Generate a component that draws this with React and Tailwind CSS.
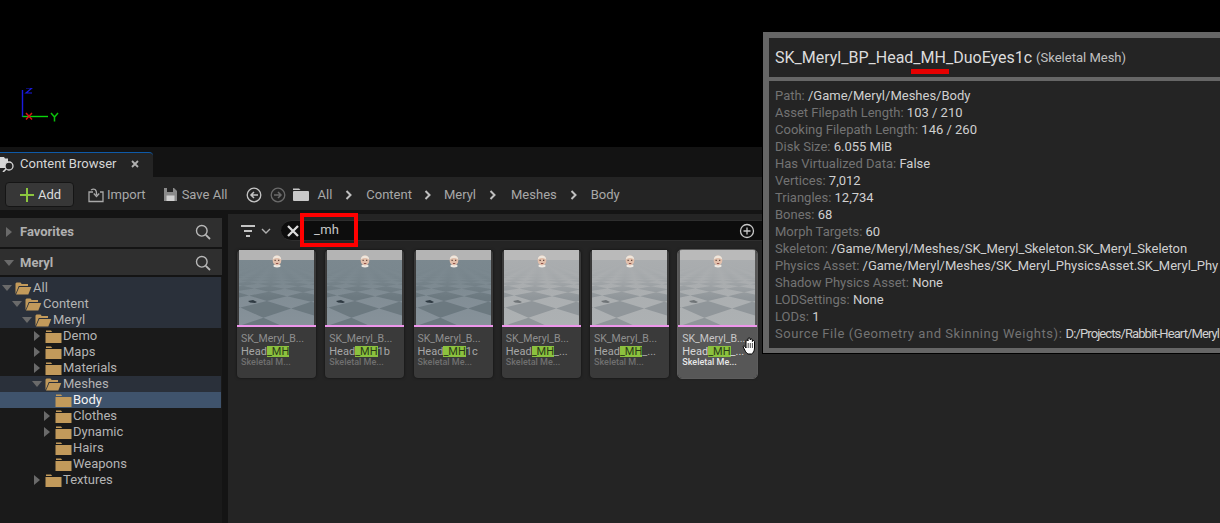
import React from "react";

const FONT = "font-['Roboto','Liberation_Sans',sans-serif]";

function Tri({ open, className = "" }) {
  return (
    <svg width="12" height="12" viewBox="0 0 12 12" className={className}>
      {open ? <path d="M1 3h10l-5 6z" fill="#6a6a6a" /> : <path d="M3 1v10l6-5z" fill="#6a6a6a" />}
    </svg>
  );
}

function Folder({ open }) {
  return open ? (
    <svg width="17" height="13" viewBox="0 0 17 13">
      <path d="M0.5 12V1.5L1.5 0.5h4l1.2 1.5h6.3V4H3.8L0.5 12z" fill="#c29a5b" />
      <path d="M4.3 5h12l-3 7.5H1z" fill="#c29a5b" />
    </svg>
  ) : (
    <svg width="17" height="13" viewBox="0 0 17 13">
      <path d="M1 0.5h5l1.2 1.6H1z" fill="#c29a5b" />
      <rect x="0.5" y="3" width="16" height="10" fill="#c29a5b" />
    </svg>
  );
}

function SearchIcon() {
  return (
    <svg width="16" height="16" viewBox="0 0 16 16" fill="none" stroke="#b8b8b8" strokeWidth="1.4">
      <circle cx="6.8" cy="6.8" r="5.3" />
      <path d="M10.8 10.8l4.2 4.2" strokeWidth="1.8" />
    </svg>
  );
}

function Chevron({ className = "" }) {
  return (
    <svg width="8" height="10" viewBox="0 0 8 10" fill="none" stroke="#c0c0c0" strokeWidth="2" className={className}>
      <path d="M1.5 1l4 4-4 4" />
    </svg>
  );
}

const floorCache = {};
function floorPolys() {
  if (floorCache.p) return floorCache.p;
  const a = 0.72;
  const c = Math.cos(a), s = Math.sin(a);
  const project = (x, z) => {
    const rx = x * c - z * s;
    const rz = x * s + z * c;
    if (rz < 1.2) return null;
    return [26.5 + (rx / rz) * 150, 10 + 150 / rz];
  };
  const T = 0.75;
  const ox = -0.565, oz = 0.475;
  const out = [];
  for (let i = -80; i < 80; i++) {
    for (let j = -80; j < 80; j++) {
      if (((i + j) % 2 + 2) % 2 === 0) continue;
      const pts = [
        project(ox + i * T, oz + j * T),
        project(ox + (i + 1) * T, oz + j * T),
        project(ox + (i + 1) * T, oz + (j + 1) * T),
        project(ox + i * T, oz + (j + 1) * T),
      ];
      if (pts.some((p) => !p)) continue;
      if (pts.every((p) => p[0] < -5) || pts.every((p) => p[0] > 80) || pts.every((p) => p[1] > 80)) continue;
      out.push(pts.map((p) => p[0].toFixed(1) + "," + p[1].toFixed(1)).join(" "));
    }
  }
  floorCache.p = out;
  return out;
}

function Thumb({ id, light }) {
  const sky = light ? "#bababa" : "#b4b4b4";
  const far = light ? "#aaadaf" : "#7b888f";
  const near = light ? "#adb1b3" : "#87929a";
  const dark = light ? "#90969a" : "#6c7980";
  return (
    <svg viewBox="0 0 75 75" width="75" height="75" className="block">
      <defs>
        <linearGradient id={"g" + id} x1="0" y1="0" x2="0" y2="1">
          <stop offset="0" stopColor={far} />
          <stop offset="1" stopColor={near} />
        </linearGradient>
        <linearGradient id={"f" + id} x1="0" y1="0" x2="0" y2="1">
          <stop offset="0" stopColor={far} stopOpacity="1" />
          <stop offset="0.5" stopColor={far} stopOpacity="0.75" />
          <stop offset="1" stopColor={far} stopOpacity="0" />
        </linearGradient>
        <clipPath id={"c" + id}><rect x="0" y="10" width="75" height="65" /></clipPath>
      </defs>
      <rect width="75" height="10" fill={sky} />
      <rect y="10" width="75" height="65" fill={"url(#g" + id + ")"} />
      <g clipPath={"url(#c" + id + ")"}>
        {floorPolys().map((p, i) => (
          <polygon key={i} points={p} fill={dark} />
        ))}
      </g>
      <rect y="10" width="75" height="38" fill={"url(#f" + id + ")"} />
      <path d="M9 51l5-1 4 2-2 1-5-.5z" fill={light ? "#6f7477" : "#2f3a42"} />
      <ellipse cx="38" cy="16" rx="3.600" ry="1.400" fill="#eeeae4" />
      <ellipse cx="38" cy="10.500" rx="4.300" ry="5" fill="#e2c0ac" />
      <path d="M33.800 9.500c0-5.500 8.400-5.500 8.400 0-2.400-2-6-2-8.400 0z" fill="#efe6dc" />
      <rect x="35.500" y="9.800" width="1.300" height="1" fill="#4a3028" />
      <rect x="39" y="9.800" width="1.300" height="1" fill="#4a3028" />
      <rect x="36.900" y="13" width="2.400" height="0.900" fill="#8a4a42" />
    </svg>
  );
}

const cards = [
  { pre: "Head", rest: "", t: "Skeletal M..." },
  { pre: "Head", rest: "1b", t: "Skeletal Me..." },
  { pre: "Head", rest: "1c", t: "Skeletal Me..." },
  { pre: "Head", rest: "_...", t: "Skeletal Me...", light: true },
  { pre: "Head", rest: "_...", t: "Skeletal M...", light: true },
  { pre: "Head", rest: "_...", t: "Skeletal Me...", light: true, sel: true },
];

function Card({ c, i }) {
  return (
    <div className={"relative flex h-[128px] w-[79px] shrink-0 flex-col rounded-[4px] shadow-[0_0_3px_rgba(0,0,0,0.6)] " + (c.sel ? "bg-[#575757] outline outline-1 outline-[#5c5c5c]" : "bg-[#3a3a3a]")}>
      <div className="mx-auto h-[75px] w-[75px] shrink-0 overflow-hidden">
        <Thumb id={i} light={c.light} />
      </div>
      <div className="h-[2px] shrink-0 bg-[#ee96ec]" />
      <div className="flex flex-col pl-[4px] pt-[5px]">
        <div className={"h-[13px] whitespace-nowrap text-[10.5px] leading-[13px] " + (c.sel ? "text-[#c8c8c8]" : "text-[#8e8e8e]")}>SK_Meryl_B...</div>
        <div className={"flex h-[13px] items-center whitespace-nowrap text-[11px] leading-[11px] " + (c.sel ? "text-[#d8d8d8]" : "text-[#a6a6a6]")}>
          <span>{c.pre}</span>
          <span className="h-[11px] bg-[#8bc13e] text-[#2a3a18]">_MH</span>
          <span>{c.rest}</span>
        </div>
        <div className={"mt-[-2px] h-[12px] whitespace-nowrap text-[9px] font-medium leading-[12px] " + (c.sel ? "text-[#e8e8e8]" : "text-[#6f6f6f]")}>{c.t}</div>
      </div>
    </div>
  );
}

const tree = [
  { d: 0, n: "All", open: true, tri: true, hl: 1 },
  { d: 1, n: "Content", open: true, tri: true, hl: 1 },
  { d: 2, n: "Meryl", open: true, tri: true, hl: 1 },
  { d: 3, n: "Demo", tri: true },
  { d: 3, n: "Maps", tri: true },
  { d: 3, n: "Materials", tri: true },
  { d: 3, n: "Meshes", open: true, tri: true, hl: 1 },
  { d: 4, n: "Body", hl: 2 },
  { d: 4, n: "Clothes", tri: true },
  { d: 4, n: "Dynamic", tri: true },
  { d: 4, n: "Hairs" },
  { d: 4, n: "Weapons" },
  { d: 3, n: "Textures", tri: true },
];

function TreeRow({ r }) {
  const bg = r.hl === 1 ? "bg-[#2a303a]" : r.hl === 2 ? "bg-[#3f536c]" : "";
  const text = r.hl === 2 ? "text-[#f4f4f4]" : "text-[#b4b4b4]";
  const pads = ["pl-[0px]", "pl-[10px]", "pl-[20px]", "pl-[30px]", "pl-[40px]"];
  return (
    <div className={"flex h-[16px] items-center text-[13px] leading-[16px] " + bg + " " + text + " " + pads[r.d]}>
      <span className="flex w-[14px] shrink-0 justify-center">{r.tri && <Tri open={r.open} />}</span>
      <span className="flex w-[19px] shrink-0 pl-[1px]"><Folder open={r.open} /></span>
      <span>{r.n}</span>
    </div>
  );
}

function PanelHead({ label, className = "" }) {
  return (
    <div className={"flex items-center justify-between bg-[#2f2f2f] pl-[3px] pr-[11px] " + className}>
      <div className="flex items-center gap-[5px]">
        <Tri open={label === "Meryl"} />
        <span className="text-[13px] font-bold text-[#b0b0b0]">{label}</span>
      </div>
      <SearchIcon />
    </div>
  );
}

const info = [
  ["Path:", "/Game/Meryl/Meshes/Body"],
  ["Asset Filepath Length:", "103 / 210"],
  ["Cooking Filepath Length:", "146 / 260"],
  ["Disk Size:", "6.055 MiB"],
  ["Has Virtualized Data:", "False"],
  ["Vertices:", "7,012"],
  ["Triangles:", "12,734"],
  ["Bones:", "68"],
  ["Morph Targets:", "60"],
  ["Skeleton:", "/Game/Meryl/Meshes/SK_Meryl_Skeleton.SK_Meryl_Skeleton"],
  ["Physics Asset:", "/Game/Meryl/Meshes/SK_Meryl_PhysicsAsset.SK_Meryl_Phy"],
  ["Shadow Physics Asset:", "None"],
  ["LODSettings:", "None"],
  ["LODs:", "1"],
  ["Source File (Geometry and Skinning Weights):", "D:/Projects/Rabbit-Heart/Meryl"],
];

export default function App() {
  return (
    <div className={"relative flex h-[523px] w-[1220px] flex-col overflow-hidden bg-black " + FONT}>
      {/* viewport */}
      <div className="relative h-[147px] shrink-0 bg-black">
        <svg width="70" height="40" viewBox="0 0 70 40" className="absolute left-[16px] top-[88px]">
          <path d="M6.500 2v27" stroke="#1a1ae0" strokeWidth="1.400" />
          <path d="M6.500 28.500H32" stroke="#0bd40b" strokeWidth="1.400" />
          <path d="M10 25l6 6.500m0-6.500l-6 6.500" stroke="#d81414" strokeWidth="1.500" fill="none" />
          <path d="M35 25l3.500 4L42 25m-3.500 4v4.500" stroke="#0bc00b" strokeWidth="1.500" fill="none" />
          <path d="M10 0h6l-6 5h6" stroke="#1a1ae0" strokeWidth="1.200" fill="none" />
        </svg>
      </div>

      {/* tab bar */}
      <div className="flex h-[30px] shrink-0 items-end bg-[#131313]">
        <div className="relative flex h-[25px] w-[153px] items-center rounded-tr-[4px] border-t border-[#0e5aa8] bg-[#242424] pb-[2px]">
          <svg width="16" height="16" viewBox="0 0 16 16" className="shrink-0">
            <path d="M-1 1h5l1 1.500h3V12H-1z" fill="#d8d8d8" />
            <circle cx="9" cy="10" r="4" fill="#242424" stroke="#d8d8d8" strokeWidth="1.300" />
            <path d="M6 13l-3 3" stroke="#d8d8d8" strokeWidth="1.600" />
          </svg>
          <span className="ml-[4px] text-[13px] text-[#d6d6d6]">Content Browser</span>
          <svg width="8" height="8" viewBox="0 0 8 8" className="ml-[15px]">
            <path d="M1 1l6 6m0-6l-6 6" stroke="#b0b0b0" strokeWidth="1.800" />
          </svg>
        </div>
      </div>

      {/* toolbar */}
      <div className="flex h-[33px] shrink-0 items-center bg-[#242424] pl-[5px] pt-[2px] text-[13px] text-[#a8a8a8]">
        <div className="flex h-[25px] w-[69px] items-center rounded-[4px] border border-[#151515] bg-[#373737] pl-[14px] text-[#dcdcdc]">
          <svg width="14" height="14" viewBox="0 0 14 14"><path d="M7 0v14M0 7h14" stroke="#8cc63f" strokeWidth="2" /></svg>
          <span className="ml-[4px]">Add</span>
        </div>
        <svg width="16" height="16" viewBox="0 0 16 16" fill="none" stroke="#a8a8a8" strokeWidth="1.300" className="ml-[14px]">
          <path d="M5 5H1v9.500h14V5h-3" />
          <path d="M3 3c3-2 6-1 5.500 5M5.800 6.500l2.700 3 2.700-3" />
        </svg>
        <span className="ml-[3px]">Import</span>
        <svg width="15" height="15" viewBox="0 0 15 15" className="ml-[17px]">
          <path d="M1 1h10l3 3v10H1z" fill="#8a8a8a" />
          <rect x="4" y="1" width="6" height="4" fill="#242424" />
          <rect x="3.500" y="8.500" width="8" height="5.500" fill="#d0d0d0" />
        </svg>
        <span className="ml-[4px]">Save All</span>
        <svg width="16" height="16" viewBox="0 0 16 16" fill="none" stroke="#c4c4c4" strokeWidth="1.300" className="ml-[19px]">
          <circle cx="8" cy="8" r="6.800" />
          <path d="M12 8H5m3-3L5 8l3 3" strokeWidth="1.500" />
        </svg>
        <svg width="16" height="16" viewBox="0 0 16 16" fill="none" stroke="#6a6a6a" strokeWidth="1.300" className="ml-[8px]">
          <circle cx="8" cy="8" r="6.800" />
          <path d="M4 8h7M8 5l3 3-3 3" strokeWidth="1.500" />
        </svg>
        <svg width="16" height="13" viewBox="0 0 16 13" className="ml-[7px]">
          <path d="M0 0.500h6l1.500 1.500H0z" fill="#c8c8c8" />
          <rect x="0" y="3" width="16" height="10" rx="1" fill="#c8c8c8" />
        </svg>
        <span className="ml-[8px]">All</span>
        <Chevron className="ml-[13px]" />
        <span className="ml-[13px]">Content</span>
        <Chevron className="ml-[12px]" />
        <span className="ml-[12px]">Meryl</span>
        <Chevron className="ml-[13px]" />
        <span className="ml-[14px]">Meshes</span>
        <Chevron className="ml-[13px]" />
        <span className="ml-[13px]">Body</span>
      </div>

      {/* body */}
      <div className="flex min-h-0 flex-1 bg-[#141414] pt-[4px]">
        <div className="flex w-[222px] shrink-0 flex-col bg-[#1a1a1a]">
          <div className="h-[4px] bg-[#141414]" />
          <PanelHead label="Favorites" className="h-[29px] pb-[2px]" />
          <div className="h-[2px] bg-[#141414]" />
          <PanelHead label="Meryl" className="h-[26px] pt-[1px]" />
          <div className="h-[2px] bg-[#141414]" />
          <div className="flex flex-col pr-[1px]">
            <div className="h-[3px] bg-[#2a303a]" />
            {tree.map((r) => <TreeRow key={r.n} r={r} />)}
          </div>
        </div>
        <div className="w-[6px] shrink-0 bg-[#141414]" />
        <div className="flex min-w-0 flex-1 flex-col bg-[#242424]">
          <div className="flex h-[33px] shrink-0 items-center pl-[13px]">
            <svg width="14" height="12" viewBox="0 0 14 12" fill="none" stroke="#c4c4c4" strokeWidth="2">
              <path d="M0 1h14M3 6h8M5 11h4" />
            </svg>
            <svg width="10" height="6" viewBox="0 0 10 6" fill="none" stroke="#b0b0b0" strokeWidth="1.400" className="ml-[6px]">
              <path d="M1 1l4 4 4-4" />
            </svg>
            <div className="relative ml-[10px] flex h-[21px] w-[482px] items-center rounded-l-full border-y border-[#2e2e2e] bg-[#0d0d0d]">
              <svg width="12" height="12" viewBox="0 0 12 12" className="ml-[6px]">
                <path d="M1 1l10 10m0-10L1 11" stroke="#dcdcdc" strokeWidth="2.300" />
              </svg>
              <span className="mb-[2px] ml-[15px] text-[13px] tracking-[0.3px] text-[#c8c8c8]">_mh</span>
              <svg width="16" height="16" viewBox="0 0 16 16" fill="none" stroke="#c8c8c8" strokeWidth="1.300" className="absolute right-[8px]">
                <circle cx="8" cy="8" r="6.500" />
                <path d="M8 4.500v7M4.500 8h7" />
              </svg>
              <div className="absolute left-[19px] top-[-8px] h-[34px] w-[58px] border-[4px] border-[#ff0000]" />
            </div>
          </div>
          <div className="flex gap-[9.25px] pl-[9px] pt-[3px]">
            {cards.map((c, i) => <Card key={i} c={c} i={i} />)}
          </div>
        </div>
      </div>

      {/* tooltip */}
      <div className="absolute left-[762px] top-[31px] h-[323px] w-[458px] border-y border-l border-black bg-[#666] pb-[5px] pl-[6px] pt-[6px]">
        <div className="flex h-[39px] items-center whitespace-nowrap bg-[#242424] pl-[6px]">
          <span className="relative text-[16px] text-[#dcdcdc]">
            SK_Meryl_BP_Head_MH_DuoEyes1c
            <span className="absolute bottom-[-4px] left-[136px] h-[5px] w-[38px] bg-[#e60000]" />
          </span>
          <span className="ml-[4px] text-[13px] text-[#c0c0c0]">(Skeletal Mesh)</span>
        </div>
        <div className="mt-[4px] h-[267px] bg-[#242424] pl-[6px] pt-[6px] text-[13px] leading-[17px]">
          {info.map(([k, v]) => {
            const isSource = k.startsWith("Source");
            return (
              <div key={k} className="h-[17px] whitespace-nowrap">
                <span className={"text-[#737373]" + (isSource ? " tracking-[0.55px]" : "")}>{k}</span>{" "}
                <span className={"text-[#d0d0d0]" + (isSource ? " tracking-[-0.9px]" : "")}>{v}</span>
              </div>
            );
          })}
        </div>
      </div>

      {/* hand cursor */}
      <svg width="16" height="18" viewBox="0 0 16 18" className="absolute left-[742px] top-[337px]">
        <path d="M1 9.500c1-1 2.500 0 3 1.500V4c0-1.600 2-1.600 2 0V2c0-1.500 2.200-1.500 2.200 0v1c0-1.400 2.200-1.400 2.200 0v1.500c0-1.300 2.100-1.300 2.100 0V11c0 3-1.500 5.500-3 6H6C4 16.500 2.500 12.500 1 9.500z" fill="#fff" stroke="#000" strokeWidth="1" />
        <path d="M6.200 6v5M8.300 6v5M10.400 6v5" stroke="#000" strokeWidth="0.700" />
      </svg>
    </div>
  );
}
